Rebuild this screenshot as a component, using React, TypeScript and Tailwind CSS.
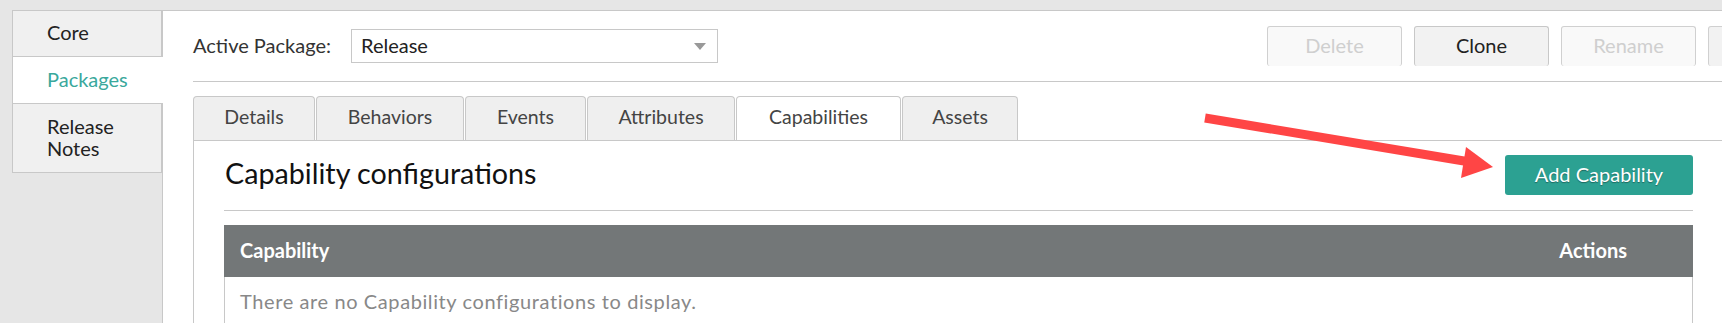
import React from "react";

const font = { fontFamily: "Lato, 'Noto Sans', sans-serif" };

function Tab({ label, w, active }: { label: string; w: string; active?: boolean }) {
  return (
    <div
      className={`${w} h-[44px] pb-[3px] flex items-center justify-center rounded-t-[4px] border border-b-0 border-[#c8c8c8] text-[19.5px] text-[#444] ${
        active ? "bg-white" : "bg-[#efefef]"
      }`}
    >
      {label}
    </div>
  );
}

export default function App() {
  return (
    <div
      className="w-[1722px] h-[323px] overflow-hidden bg-[#e6e6e6] pt-[10px] flex relative"
      style={font}
    >
      {/* Left nav */}
      <div className="ml-[12px] w-[150px] flex flex-col self-start relative z-10">
        <div className="h-[47px] pb-[3px] border border-[#c8c8c8] bg-[#f0f0f0] pl-[34px] flex items-center text-[20px] text-[#222]">
          Core
        </div>
        <div className="h-[47px] pb-[3px] w-[151px] border-l border-b border-[#c8c8c8] bg-white pl-[34px] flex items-center text-[20px] text-[#3aa89c]">
          Packages
        </div>
        <div className="h-[69px] pb-[3px] border-l border-r border-b border-[#c8c8c8] bg-[#f0f0f0] pl-[34px] flex items-center text-[20px] leading-[22px] text-[#222]">
          <div className="w-[80px]">Release Notes</div>
        </div>
      </div>

      {/* Main panel */}
      <div className="w-[1593px] shrink-0 bg-white border-l border-t border-[#c8c8c8] pl-[30px] pr-[31px] flex flex-col">
        {/* Top row */}
        <div className="pt-[15px] h-[56px] flex items-center justify-between">
          <div className="flex items-center">
            <span className="w-[158px] pb-[3px] text-[20px] text-[#333]">Active Package:</span>
            <div className="w-[367px] h-[34px] border border-[#c8c8c8] flex items-center justify-between pl-[9px] pr-[11px] text-[20px] text-[#222]">
              <span className="pb-[3px]">Release</span>
              <svg width="12" height="7" viewBox="0 0 12 7">
                <path d="M0 0 L12 0 L6 7 Z" fill="#999" />
              </svg>
            </div>
          </div>
          <div className="flex gap-[12px] -mr-[119px]">
            <div className="w-[135px] h-[40px] pb-[3px] rounded-[3px] border border-b-0 border-[#d0d0d0] bg-[#f9f9f9] flex items-center justify-center text-[20px] text-[#cfcfcf]">
              Delete
            </div>
            <div className="w-[135px] h-[40px] pb-[3px] rounded-[3px] border border-b-0 border-[#c8c8c8] bg-[#f2f2f2] flex items-center justify-center text-[20px] text-[#222]">
              Clone
            </div>
            <div className="w-[135px] h-[40px] pb-[3px] rounded-[3px] border border-b-0 border-[#d0d0d0] bg-[#f9f9f9] flex items-center justify-center text-[20px] text-[#cfcfcf]">
              Rename
            </div>
            <div className="w-[135px] h-[40px] rounded-[3px] border border-b-0 border-[#d0d0d0] bg-[#f2f2f2]" />
          </div>
        </div>

        <div className="mt-[15px] border-t border-[#c8c8c8]" />

        {/* Tabs */}
        <div className="mt-[14px] flex gap-[1px]">
          <Tab label="Details" w="w-[122px]" />
          <Tab label="Behaviors" w="w-[148px]" />
          <Tab label="Events" w="w-[121px]" />
          <Tab label="Attributes" w="w-[148px]" />
          <Tab label="Capabilities" w="w-[165px]" active />
          <Tab label="Assets" w="w-[116px]" />
        </div>

        {/* Tab content */}
        <div className="flex-1 border-l border-t border-r border-[#c8c8c8] px-[30px]">
          <div className="mt-[14px] h-[40px] flex items-center justify-between">
            <h2 className="text-[28.7px] text-[#111] pl-[1px] pb-[2px]">Capability configurations</h2>
            <div
              className="w-[188px] h-[40px] pb-[3px] rounded-[3px] bg-[#2ca192] flex items-center justify-center text-[20px] text-white"
              style={{ textShadow: "0 1px 1px rgba(0,0,0,0.35)" }}
            >
              Add Capability
            </div>
          </div>
          <div className="mt-[15px] border-t border-[#c8c8c8]" />
          <div className="mt-[14px] border-l border-r border-[#c8c8c8]">
            <div className="h-[52px] pb-[3px] bg-[#737778] flex items-center justify-between pl-[16px] pr-[66px] text-[20px] font-bold text-white -mx-px">
              <span>Capability</span>
              <span>Actions</span>
            </div>
            <div className="h-[50px] pb-[3px] flex items-center pl-[15px] text-[20px] tracking-[0.6px] text-[#888]">
              There are no Capability configurations to display.
            </div>
          </div>
        </div>
      </div>

      {/* Annotation arrow */}
      <svg className="absolute left-0 top-0 pointer-events-none" width="1722" height="323">
        <line x1="1205" y1="118" x2="1470" y2="162" stroke="#ff4545" strokeWidth="9" />
        <polygon points="1493,167 1466,147 1461,178" fill="#ff4545" />
      </svg>
    </div>
  );
}
